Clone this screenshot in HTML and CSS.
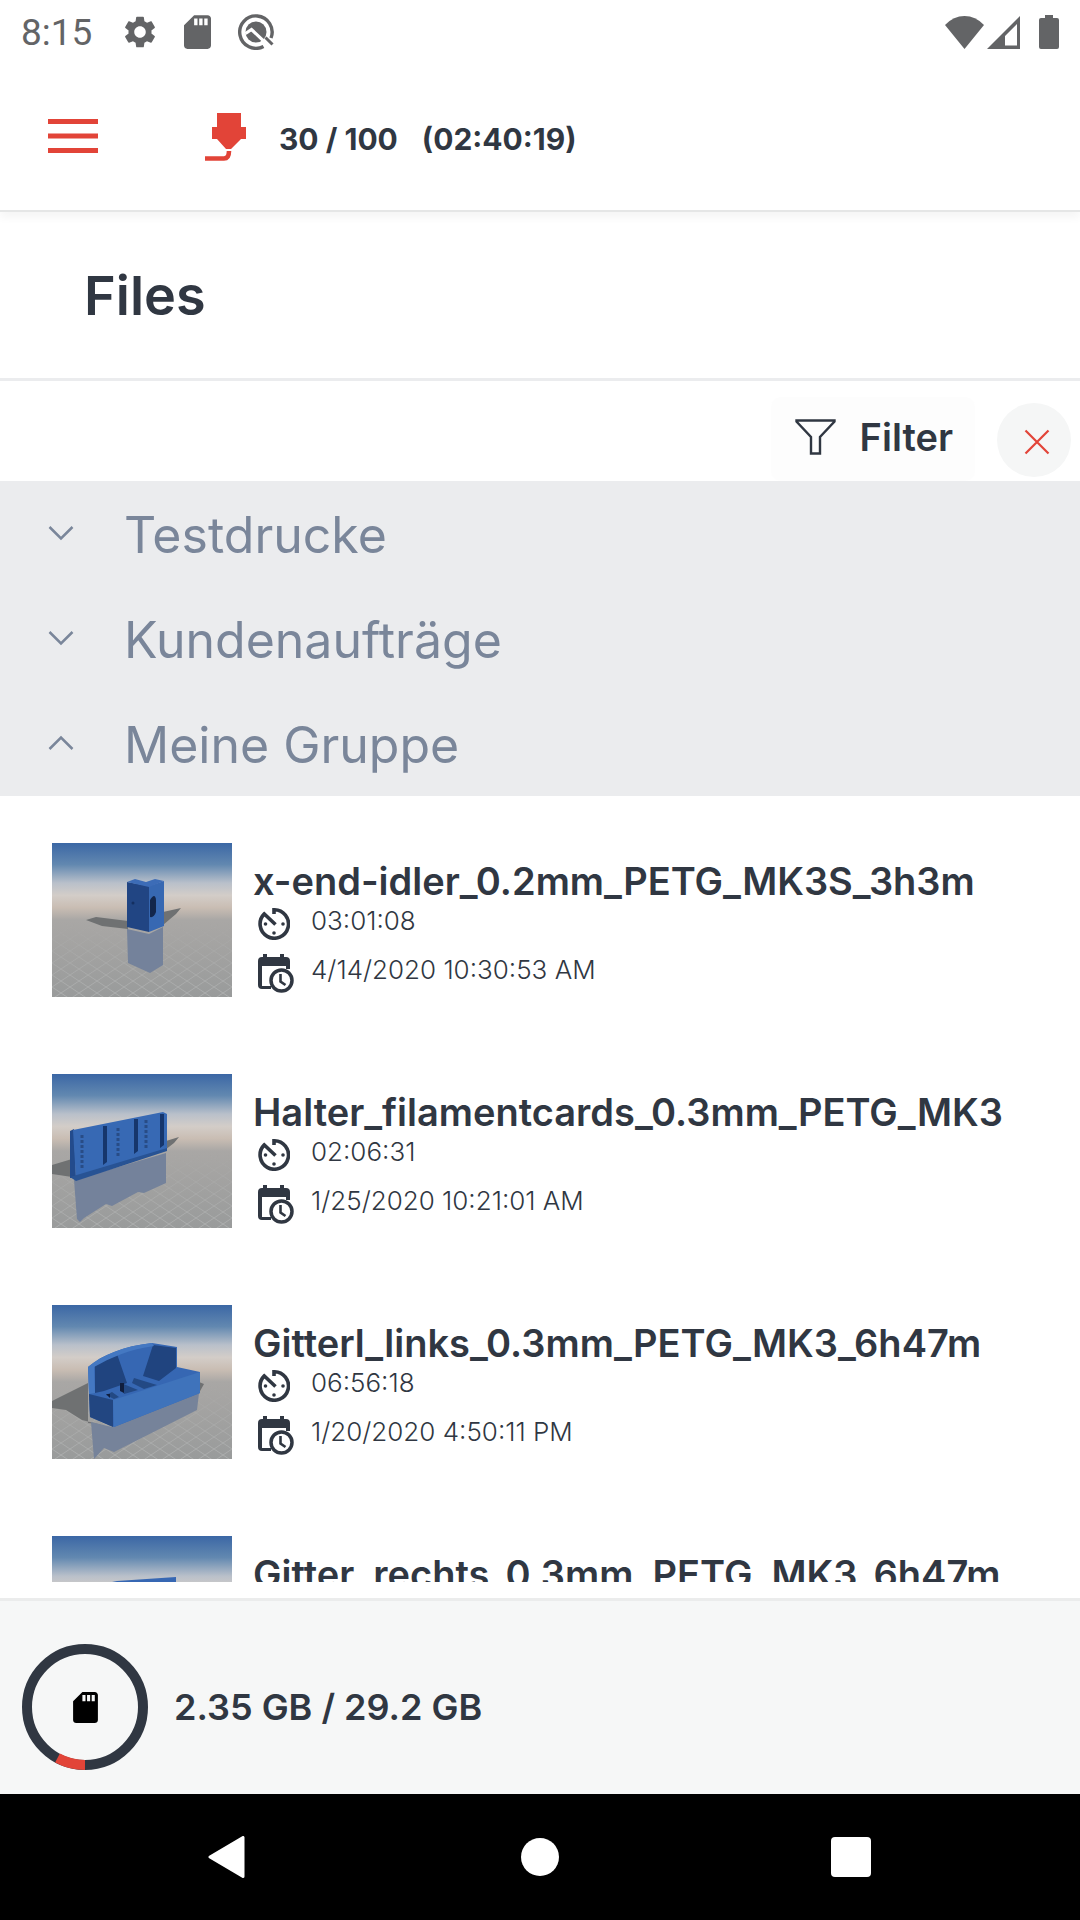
FILE: index.html
```html
<!DOCTYPE html>
<html lang="en">
<head>
<meta charset="utf-8">
<meta name="viewport" content="width=device-width, initial-scale=1">
<title>Files</title>
<link rel="stylesheet" href="styles.css">
</head>
<body>
<svg class="defs" aria-hidden="true">
  <defs>
    <linearGradient id="sky" x1="0" y1="0" x2="0" y2="1">
      <stop offset="0" stop-color="#3b67a5"/>
      <stop offset=".14" stop-color="#6288b0"/>
      <stop offset=".26" stop-color="#b9c0ca"/>
      <stop offset=".34" stop-color="#d3cdc8"/>
      <stop offset=".42" stop-color="#c9bdb3"/>
      <stop offset=".5" stop-color="#a9a7a5"/>
      <stop offset="1" stop-color="#999b9b"/>
    </linearGradient>
    <pattern id="grid" width="18" height="12" patternUnits="userSpaceOnUse">
      <path d="M0 0L18 12M18 0L0 12" stroke="#c4c6c6" stroke-width="1" opacity=".45"/>
    </pattern>
    <linearGradient id="fade" x1="0" y1="0" x2="0" y2="1">
      <stop offset="0" stop-color="#fff" stop-opacity="0"/>
      <stop offset="1" stop-color="#fff"/>
    </linearGradient>
    <mask id="floor"><rect y="80" width="180" height="74" fill="url(#fade)"/></mask>
    <symbol id="scene" viewBox="0 0 180 154">
      <rect width="180" height="154" fill="url(#sky)"/>
      <rect y="80" width="180" height="74" fill="url(#grid)" mask="url(#floor)"/>
    </symbol>
    <symbol id="sd" viewBox="4 2 16 20">
      <path d="M18 2h-8L4 8v12c0 1.100.9 2 2 2h12c1.100 0 2-.9 2-2V4c0-1.100-.9-2-2-2zm-6 6h-2V4h2v4zm3 0h-2V4h2v4zm3 0h-2V4h2v4z"/>
    </symbol>
    <symbol id="timer" viewBox="0 0 32 32">
      <path d="M16 6V1.800A14.200 14.200 0 1 1 6.300 5.900L17.500 16.500" fill="none" stroke="currentColor" stroke-width="3.600"/>
      <circle cx="7.500" cy="16" r="1.800"/><circle cx="25" cy="16" r="1.800"/><circle cx="16" cy="25" r="1.800"/>
    </symbol>
    <symbol id="calendar" viewBox="0 0 36 39">
      <path d="M5 0h4v3h13V0h4v3h2a4 4 0 0 1 4 4v8h-4v-3H4v20h9v3H4a4 4 0 0 1-4-4V7a4 4 0 0 1 4-4h1z"/>
      <circle cx="23.500" cy="26.500" r="10.500" fill="#fff" stroke="currentColor" stroke-width="3.500"/>
      <path d="M22.500 20v7.500l5 3.500" fill="none" stroke="currentColor" stroke-width="2.600"/>
    </symbol>
    <symbol id="chevron" viewBox="0 0 26 16">
      <path d="M1.500 2L13 13.500L24.500 2" fill="none" stroke="currentColor" stroke-width="2.500"/>
    </symbol>
  </defs>
</svg>

<div class="status-bar">
  <span class="clock">8:15</span>
  <svg class="status-icon gear" viewBox="2 2 20 20"><path d="M19.140 12.940c.04-.3.06-.61.06-.94 0-.32-.02-.64-.07-.94l2.030-1.580c.18-.14.23-.41.12-.61l-1.920-3.320c-.12-.22-.37-.29-.59-.22l-2.390.96c-.5-.38-1.030-.7-1.620-.94l-.36-2.540c-.04-.24-.24-.41-.48-.41h-3.840c-.24 0-.43.17-.47.41l-.36 2.540c-.59.24-1.130.57-1.620.94l-2.390-.96c-.22-.08-.47 0-.59.22L2.740 8.870c-.12.21-.08.47.12.61l2.030 1.580c-.05.3-.09.63-.09.94s.02.64.07.94l-2.030 1.580c-.18.14-.23.41-.12.61l1.920 3.320c.12.22.37.29.59.22l2.390-.96c.5.38 1.030.7 1.620.94l.36 2.540c.05.24.24.41.48.41h3.840c.24 0 .44-.17.47-.41l.36-2.540c.59-.24 1.130-.56 1.620-.94l2.390.96c.22.08.47 0 .59-.22l1.920-3.320c.12-.22.07-.47-.12-.61l-2.010-1.580zM12 15.600c-1.980 0-3.600-1.620-3.600-3.600s1.620-3.600 3.600-3.600 3.600 1.620 3.600 3.600-1.620 3.600-3.600 3.600z"/></svg>
  <svg class="status-icon card"><use href="#sd"/></svg>
  <svg class="status-icon search" viewBox="0 0 36 36">
    <path d="M25.500 32.400A16.200 16.200 0 1 1 33 24" fill="none" stroke="currentColor" stroke-width="3.400"/>
    <circle cx="18" cy="18" r="10.500"/>
    <path d="M7.500 19.500L13.500 15.500L33 34" fill="none" stroke="#fff" stroke-width="3.200"/>
    <path d="M27.500 23.500L34.500 30.500" stroke="currentColor" stroke-width="3"/>
  </svg>
  <div class="signals">
    <svg class="wifi" viewBox="0 0 39 33"><path d="M0 9Q8.500 0 19.500 0T39 9L19.500 33z"/></svg>
    <svg class="cell" viewBox="0 0 33 33"><path fill-rule="evenodd" d="M33 0V33H0zM30 8L18 20v9.500h12z"/></svg>
    <svg class="battery" viewBox="0 0 20 34"><path d="M6 0h8v3h4a2 2 0 0 1 2 2v27a2 2 0 0 1-2 2H2a2 2 0 0 1-2-2V5a2 2 0 0 1 2-2h4z"/></svg>
  </div>
</div>

<header class="app-bar">
  <button class="menu" type="button" aria-label="Menu">
    <svg viewBox="0 0 50 34"><path d="M0 0h50v5H0zM0 14.500h50v5H0zM0 29h50v5H0z"/></svg>
  </button>
  <svg class="nozzle" viewBox="0 0 41 48"><path d="M12 0h24v14h5v12h-5L26 36h-5L12 26H7V14h5z"/><path d="M0 45.500h19q5 0 5-7.500" fill="none" stroke="currentColor" stroke-width="4.600"/></svg>
  <span class="progress">30 / 100</span>
  <span class="progress">(02:40:19)</span>
</header>

<div class="title-bar"><h1>Files</h1></div>

<div class="toolbar">
  <button class="filter" type="button">
    <svg viewBox="0 0 41 36"><path d="M1.500 1.500h38v1L25 18v16.500h-9V18L1.500 2.500z" fill="none" stroke="currentColor" stroke-width="2.400"/></svg>
    Filter
  </button>
  <button class="clear" type="button" aria-label="Clear filter">
    <svg viewBox="0 0 26 26"><path d="M1.500 1.500l23 23M24.500 1.500l-23 23" stroke="currentColor" stroke-width="2.200"/></svg>
  </button>
</div>

<div class="groups">
  <button class="group" type="button" aria-expanded="false"><svg class="chevron"><use href="#chevron"/></svg>Testdrucke</button>
  <button class="group" type="button" aria-expanded="false"><svg class="chevron"><use href="#chevron"/></svg>Kundenaufträge</button>
  <button class="group" type="button" aria-expanded="true"><svg class="chevron up"><use href="#chevron"/></svg>Meine Gruppe</button>
</div>

<ul class="files">
  <li class="file">
    <svg class="thumb" viewBox="0 0 180 154">
      <use href="#scene"/>
      <path d="M34 77L44 74L76 78V86L50 83zM111 69L129 65L124 71L111 82z" fill="#6f7172"/>
      <path d="M75 86L97 91L111 84V122L98 130L76 120z" fill="#74829b"/>
      <path d="M75 39L97 43V89L75 84z" fill="#214583"/>
      <path d="M97 43L112 38V83L97 89z" fill="#3768b2"/>
      <path d="M75 39L83 36L94 39L103 36L112 38L97 44z" fill="#3c6cb7"/>
      <path d="M98 57q5-8 6 0v12q-2 6-6 5z" fill="#13264b"/>
      <circle cx="81" cy="60" r="1.500" fill="#142f60"/>
    </svg>
    <div class="info">
      <h2>x-end-idler_0.2mm_PETG_MK3S_3h3m</h2>
      <p class="meta"><svg class="timer"><use href="#timer"/></svg>03:01:08</p>
      <p class="meta date"><svg class="calendar"><use href="#calendar"/></svg>4/14/2020 10:30:53 AM</p>
    </div>
  </li>
  <li class="file">
    <svg class="thumb" viewBox="0 0 180 154">
      <use href="#scene"/>
      <path d="M0 91L20 85V103L0 100zM114 67L127 63L122 69L113 76z" fill="#6f7172"/>
      <path d="M22 106L114 79V109L92 119L86 118L60 132L54 130L32 144L28 148L25 145z" fill="#74829b"/>
      <path d="M18 57L22 55L24 104L18 104z" fill="#234b8c"/>
      <path d="M21 56L111 38L115 40V76L24 106z" fill="#3769b4"/>
      <path d="M18 103L115 74V77L24 107z" fill="#285394"/>
      <path d="M51 52h4v36l-4 3zM82 45h4v32l-4 3zM108 40h4v31l-4 3z" fill="#16366c"/>
      <path d="M30 61v34M66 54v30M94 46v29" stroke="#284c86" stroke-width="3" stroke-dasharray="3 2"/>
    </svg>
    <div class="info">
      <h2>Halter_filamentcards_0.3mm_PETG_MK3</h2>
      <p class="meta"><svg class="timer"><use href="#timer"/></svg>02:06:31</p>
      <p class="meta date"><svg class="calendar"><use href="#calendar"/></svg>1/25/2020 10:21:01 AM</p>
    </div>
  </li>
  <li class="file">
    <svg class="thumb" viewBox="0 0 180 154">
      <use href="#scene"/>
      <path d="M0 96L36 78V118L50 120L30 115L14 105L0 103zM147 77L152 79L147 88z" fill="#6f7172"/>
      <path d="M39 117L60 122L147 88L145 105L62 147L52 143L42 154z" fill="#76839a"/>
      <path d="M36 62C50 50 72 41 100 38L125 42V62L148 67V88L62 122L38 112z" fill="#3667b3"/>
      <path d="M43 60L65 49L75 78L52 86L43 88zM101 40L124 43V63L107 76L91 71z" fill="#20447f"/>
      <path d="M36 62C50 50 72 41 100 38L102 41C78 44 58 53 42 62L43 88L37 89z" fill="#4478c2"/>
      <path d="M37 89L61 95V122L38 112z" fill="#224681"/>
      <path d="M61 95L148 67V88L62 122z" fill="#3f73bb"/>
      <path d="M82 73L105 80L92 84L80 78zM69 78L86 85L72 89zM54 90L60 87L67 92L62 94z" fill="#234984"/>
      <path d="M68 78h4v10l-4-2zM54 89h4v4z" fill="#101e3d"/>
    </svg>
    <div class="info">
      <h2>Gitterl_links_0.3mm_PETG_MK3_6h47m</h2>
      <p class="meta"><svg class="timer"><use href="#timer"/></svg>06:56:18</p>
      <p class="meta date"><svg class="calendar"><use href="#calendar"/></svg>1/20/2020 4:50:11 PM</p>
    </div>
  </li>
  <li class="file">
    <svg class="thumb" viewBox="0 0 180 154">
      <use href="#scene"/>
      <path d="M50 48L65 45L124 41V62L148 67V88L62 122L38 112V70z" fill="#3667b3"/>
    </svg>
    <div class="info">
      <h2>Gitter_rechts_0.3mm_PETG_MK3_6h47m</h2>
    </div>
  </li>
</ul>

<footer class="storage">
  <svg class="ring" viewBox="0 0 126 126">
    <circle cx="63" cy="63" r="58" fill="none" stroke="#303742" stroke-width="10"/>
    <path d="M63 121A58 58 0 0 1 35.500 114" fill="none" stroke="#e24438" stroke-width="10"/>
    <use href="#sd" x="51" y="48" width="25" height="31" fill="#000"/>
  </svg>
  <span>2.35 GB / 29.2 GB</span>
</footer>

<nav class="system-nav">
  <button type="button" aria-label="Back"><svg viewBox="0 0 42 42"><path d="M2 21L35 1.500V40.500z" stroke="#fff" stroke-width="3" stroke-linejoin="round"/></svg></button>
  <button type="button" aria-label="Home"><svg viewBox="0 0 42 42"><circle cx="21" cy="21" r="19"/></svg></button>
  <button type="button" aria-label="Recent apps"><svg viewBox="0 0 42 42"><rect x="1" y="1" width="40" height="40" rx="4"/></svg></button>
</nav>
</body>
</html>
```
FILE: styles.css
```css
* {
  box-sizing: border-box;
}

body {
  display: flex;
  flex-direction: column;
  height: 100vh;
  margin: 0;
  background: #fff;
  color: #303742;
  font-family: Inter, sans-serif;
}

h1, h2, p, ul {
  margin: 0;
  padding: 0;
}

button {
  padding: 0;
  border: 0;
  background: none;
  color: inherit;
  font: inherit;
}

svg {
  display: block;
  flex: none;
  fill: currentColor;
}

.defs {
  position: absolute;
  width: 0;
  height: 0;
}

.status-bar {
  display: flex;
  flex: none;
  align-items: center;
  height: 64px;
  padding: 0 21px;
  color: #636466;
}

.clock {
  width: 103px;
  padding-top: 2px;
  font: 37px/64px Roboto, sans-serif;
}

.gear { width: 32px; height: 34px; }
.card { width: 27px; height: 34px; margin-left: 28px; }
.search { width: 36px; height: 36px; margin-left: 27px; }

.signals {
  display: flex;
  align-items: center;
  margin-left: auto;
}

.wifi { width: 39px; height: 33px; }
.cell { width: 33px; height: 33px; margin: 0 19px 0 3px; }
.battery { width: 20px; height: 34px; }

.app-bar {
  display: flex;
  flex: none;
  align-items: center;
  height: 148px;
  padding: 0 48px 2px;
  border-bottom: 2px solid #e5e6e6;
  box-shadow: 0 6px 8px rgba(0, 0, 0, .04);
}

.menu, .nozzle {
  color: #e24438;
}

.menu svg { width: 50px; height: 34px; }
.nozzle { width: 41px; height: 48px; margin: 2px 33px 0 107px; }

.progress {
  margin-right: 24px;
  padding-top: 6px;
  font-size: 30px;
  font-weight: 700;
}

.title-bar {
  flex: none;
  padding: 52px 84px 50px;
  border-bottom: 3px solid #ebecee;
}

h1 {
  font-size: 54px;
  font-weight: 600;
  line-height: 64px;
}

.toolbar {
  display: flex;
  flex: none;
  align-items: flex-end;
  justify-content: flex-end;
  gap: 22px;
  height: 100px;
  padding-right: 9px;
}

.filter {
  display: flex;
  align-items: center;
  gap: 24px;
  height: 84px;
  padding: 0 22px 4px 24px;
  border-radius: 10px;
  background: #fdfdfd;
  font-size: 38px;
  font-weight: 600;
}

.filter svg { width: 41px; height: 36px; }

.clear {
  display: flex;
  align-items: center;
  justify-content: center;
  width: 74px;
  height: 74px;
  margin-bottom: 4px;
  padding: 4px 0 0 6px;
  border-radius: 50%;
  background: #f5f6f6;
  color: #e24438;
}

.clear svg { width: 26px; height: 26px; }

.groups {
  flex: none;
  background: #ebecee;
  color: #7a869a;
}

.group {
  display: flex;
  align-items: center;
  gap: 50px;
  width: 100%;
  height: 105px;
  padding: 2px 48px 0;
  font-size: 50px;
}

.chevron {
  width: 26px;
  height: 16px;
  margin-bottom: 4px;
}

.up { transform: rotate(180deg); }

.files {
  display: flex;
  flex: 1;
  flex-direction: column;
  gap: 77px;
  min-height: 0;
  margin-bottom: 16px;
  padding: 47px 52px 0;
  overflow: auto;
  list-style: none;
  scrollbar-width: none;
}

.file {
  display: flex;
  flex: none;
  gap: 21px;
}

.thumb { width: 180px; height: 154px; }

.info {
  min-width: 0;
  padding-top: 14px;
}

h2 {
  font-size: 38px;
  font-weight: 600;
  line-height: 48px;
  white-space: nowrap;
}

.meta {
  display: flex;
  height: 38px;
  padding-left: 5px;
  font-size: 26px;
  font-weight: 300;
  line-height: 32px;
}

.meta svg { align-self: center; }

.date { margin-top: 11px; }

.timer { width: 32px; height: 32px; margin-right: 21px; }
.calendar { width: 36px; height: 39px; margin-right: 17px; }

.storage {
  display: flex;
  flex: none;
  align-items: center;
  gap: 26px;
  height: 196px;
  padding: 19px 22px 0;
  border-top: 3px solid #ebecec;
  background: #f6f7f7;
  font-size: 36px;
  font-weight: 600;
}

.ring { width: 126px; height: 126px; }

.system-nav {
  display: flex;
  flex: none;
  align-items: center;
  justify-content: space-between;
  height: 126px;
  padding: 0 208px;
  background: #000;
  color: #fff;
}

.system-nav svg { width: 42px; height: 42px; }
```
